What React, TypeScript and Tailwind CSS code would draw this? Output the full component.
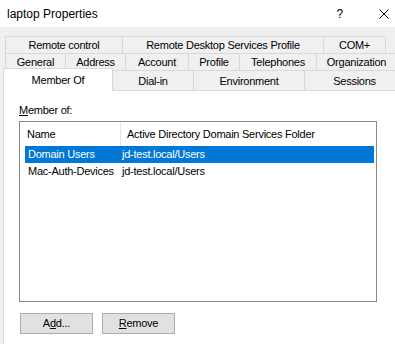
import React from 'react'

const tab = 'flex items-center justify-center border-t border-l border-[#d9d9d9] bg-[#f0f0f0] whitespace-nowrap shrink-0'

const ROW1 = [
  { label: 'Remote control', w: 'w-[117px]' },
  { label: 'Remote Desktop Services Profile', w: 'w-[201px]' },
  { label: 'COM+', w: 'w-[63px] border-r' },
]
const ROW2 = [
  { label: 'General', w: 'w-[60px]' },
  { label: 'Address', w: 'w-[60px]' },
  { label: 'Account', w: 'w-[63px]' },
  { label: 'Profile', w: 'w-[51px]' },
  { label: 'Telephones', w: 'w-[77px]' },
  { label: 'Organization', w: 'w-[80px]' },
]

const GROUPS = [
  { name: 'Domain Users', folder: 'jd-test.local/Users', selected: true },
  { name: 'Mac-Auth-Devices', folder: 'jd-test.local/Users', selected: false },
]

export default function App() {
  return (
    <div className="w-[395px] h-[344px] overflow-hidden bg-[#f0f0f0] text-black text-[11px] tracking-[-0.25px] font-['Liberation_Sans',Arial,sans-serif] flex flex-col">
      {/* title bar */}
      <div className="h-[27px] bg-white flex items-center pl-[7px] shrink-0">
        <span className="text-[12px] tracking-normal">laptop Properties</span>
        <span className="ml-auto text-[12px]">?</span>
        <svg className="ml-[36px] mr-[6px]" width="10" height="10" viewBox="0 0 10 10">
          <path d="M0.5 0.5 L9.5 9.5 M9.5 0.5 L0.5 9.5" stroke="#000" strokeWidth="1" fill="none" />
        </svg>
      </div>

      {/* tabs */}
      <div className="mt-[9px] flex h-[17px] pl-[5px]">
        {ROW1.map(t => <div key={t.label} className={`${tab} ${t.w}`}>{t.label}</div>)}
      </div>
      <div className="flex h-[17px] pl-[5px]">
        {ROW2.map(t => <div key={t.label} className={`${tab} ${t.w} pt-[1px]`}>{t.label}</div>)}
      </div>
      <div className="flex h-[20px] pl-[3px]">
        <div className="relative z-10 -mt-[2px] h-[23px] w-[110px] shrink-0 bg-white border-t border-l border-r border-[#d9d9d9] flex justify-center pt-[3px]">
          Member Of
        </div>
        <div className="flex items-center justify-center w-[80px] shrink-0 border-t border-[#d9d9d9] pt-[2px]">Dial-in</div>
        <div className={`${tab} w-[111px] pt-[2px]`}>Environment</div>
        <div className={`${tab} w-[100px] pt-[2px]`}>Sessions</div>
      </div>

      {/* page */}
      <div className="ml-[3px] flex-1 bg-white border-l border-t border-[#d9d9d9] pl-[15px] pt-[11px]">
        <p className="h-[16px] leading-[16px]"><span className="underline">M</span>ember of:</p>
        <div className="mt-[3px] w-[358px] h-[181px] border border-[#828790] bg-white">
          <div className="flex h-[24px]">
            <div className="w-[101px] border-r border-[#e5e5e5] pl-[7px] flex items-center">Name</div>
            <div className="pl-[6px] flex items-center whitespace-nowrap">Active Directory Domain Services Folder</div>
          </div>
          {GROUPS.map(g => (
            <div key={g.name}
              className={`ml-[5px] mr-[2px] h-[17px] flex items-center whitespace-nowrap ${g.selected ? 'bg-[#0078d7] text-white' : ''}`}>
              <span className="w-[97px] pl-[3px]">{g.name}</span>
              <span>{g.folder}</span>
            </div>
          ))}
        </div>
        <div className="mt-[11px] ml-[1px] flex gap-[9px]">
          <button className="w-[73px] h-[21px] bg-[#e1e1e1] border border-[#adadad]">
            A<span className="underline">d</span>d...
          </button>
          <button className="w-[73px] h-[21px] bg-[#e1e1e1] border border-[#adadad]">
            <span className="underline">R</span>emove
          </button>
        </div>
      </div>
    </div>
  )
}
